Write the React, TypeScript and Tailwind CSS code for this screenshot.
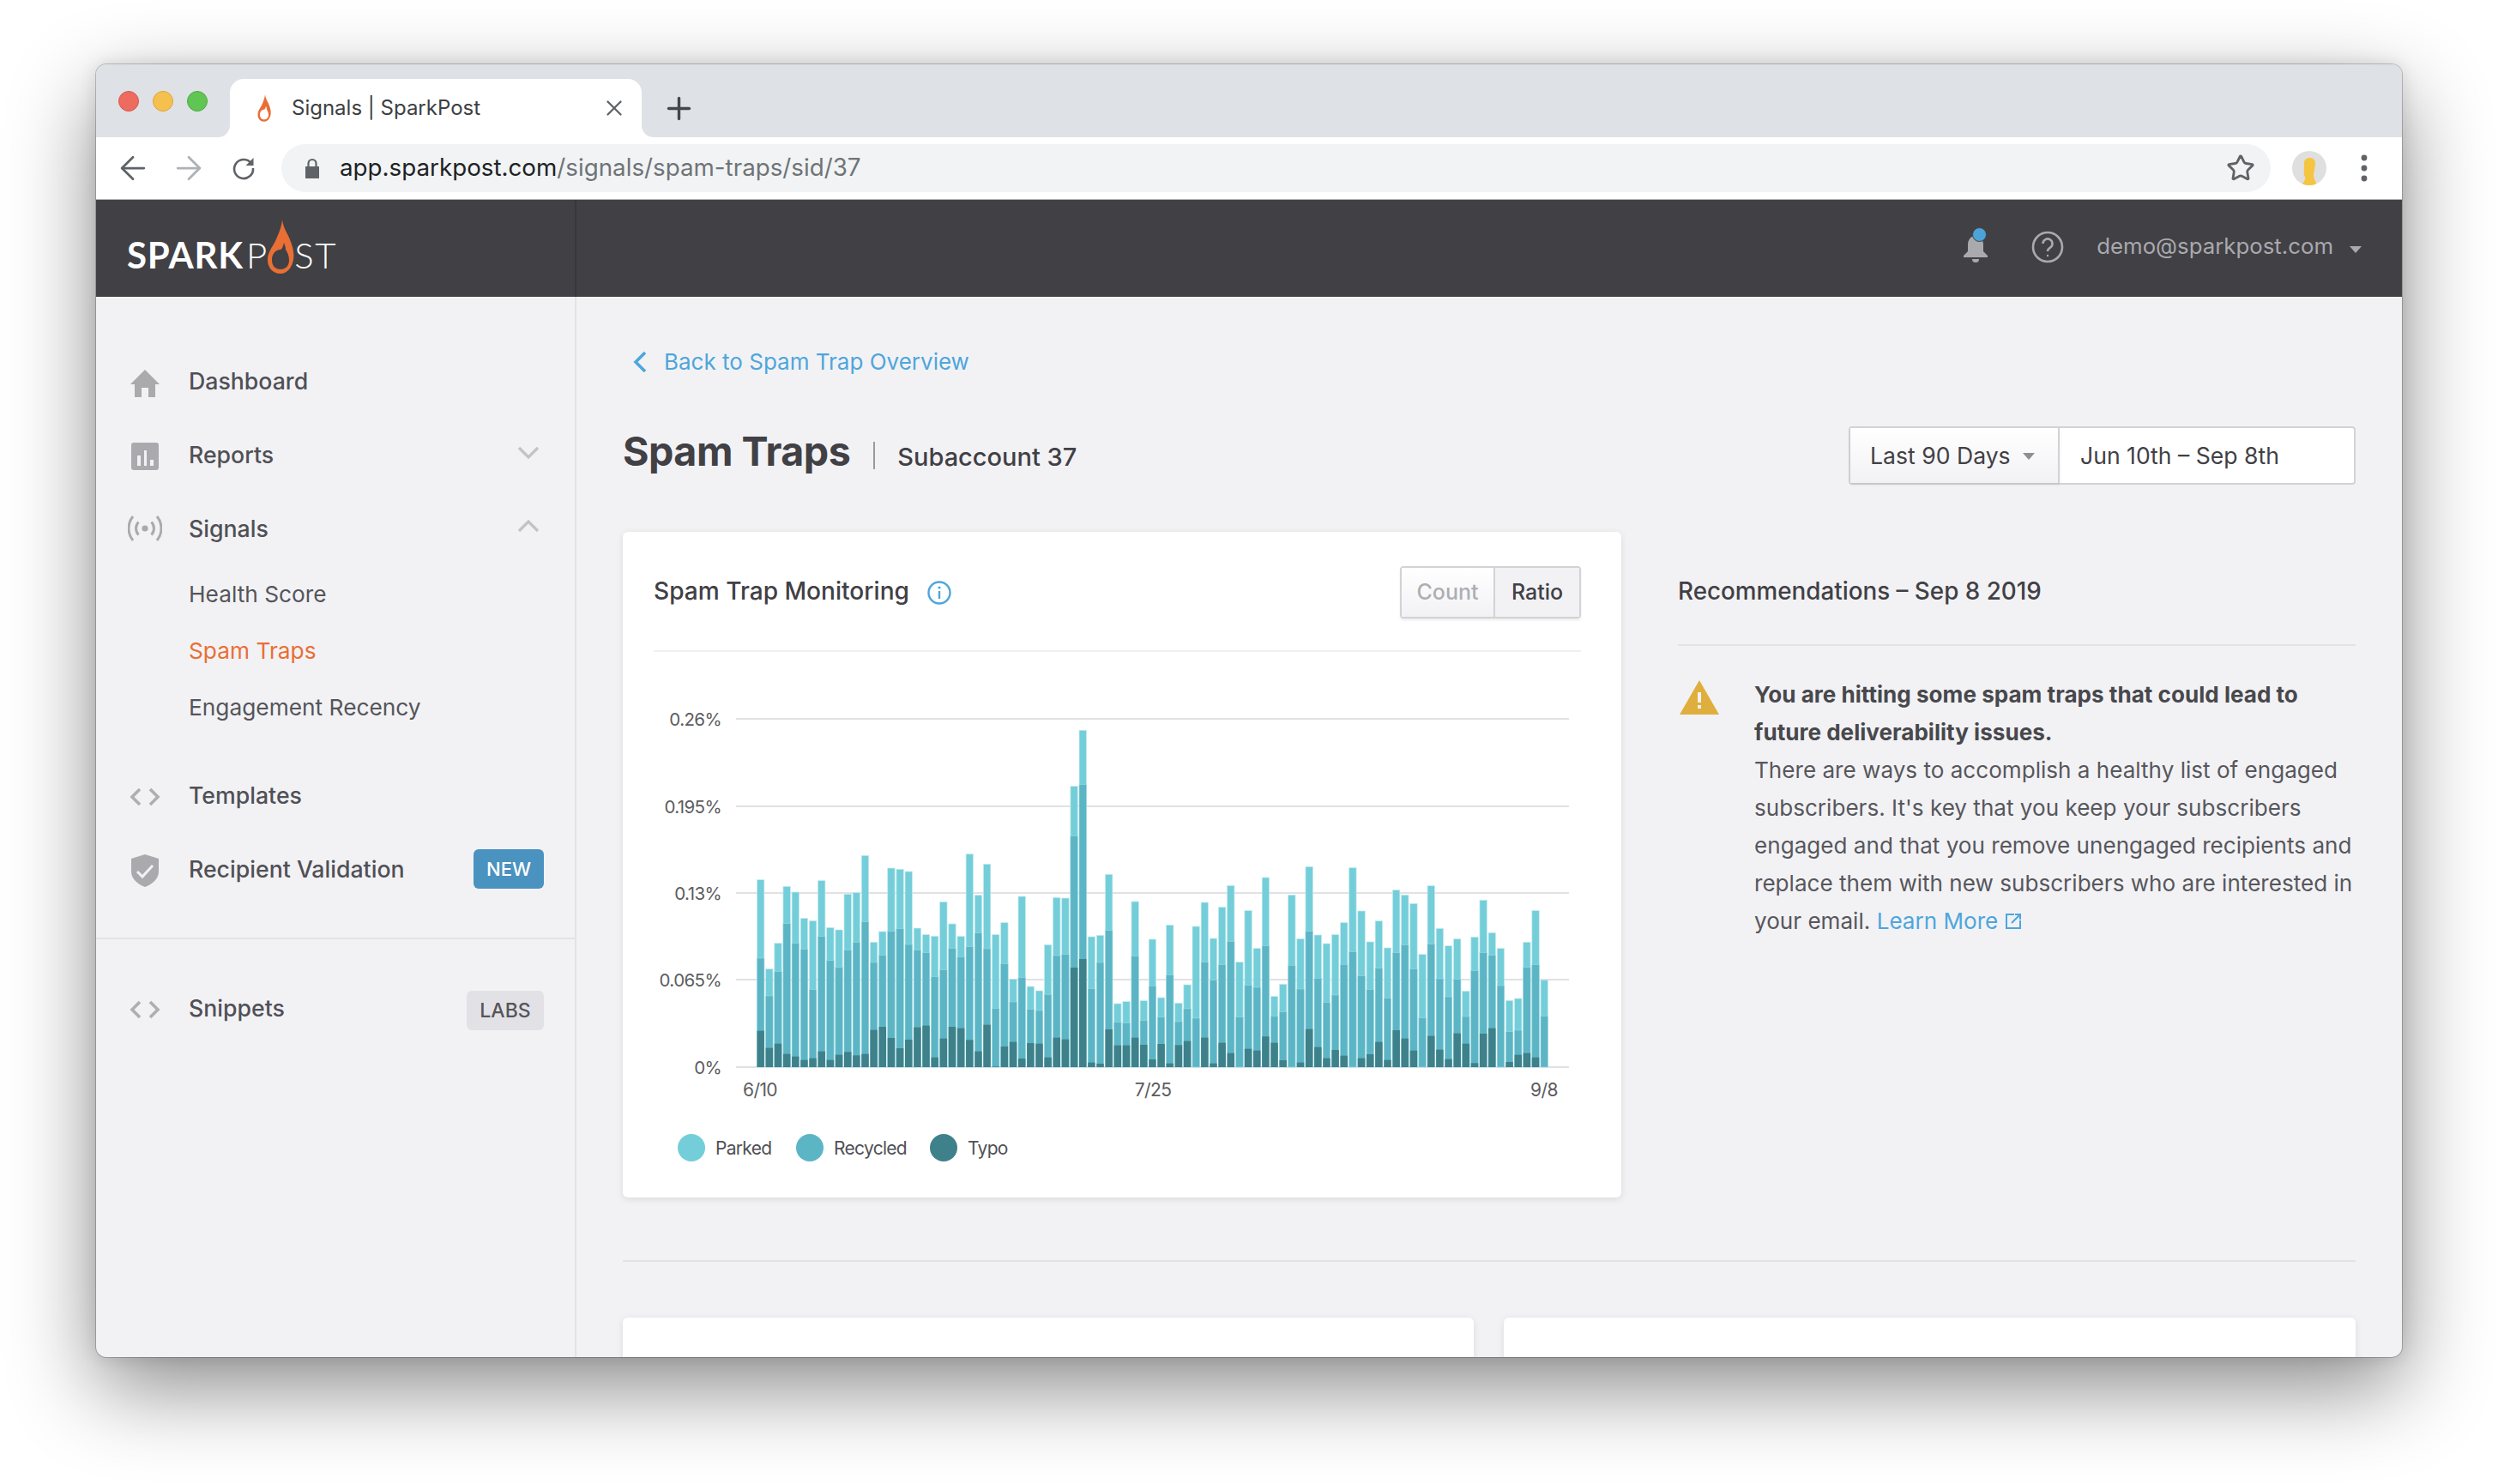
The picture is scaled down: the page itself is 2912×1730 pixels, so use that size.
/**
 * Signals - Spam Traps page inside a browser window
 */

import React from 'react';
import { ArrowLeft, ArrowRight, Star, X, Plus } from 'lucide-react';

// Bar tops as [total, recycled, typo], measured in 1/3 px from the top of the plot area
const bars: number[][] = [
  [677, 951, 1205], [989, 1083, 1265], [899, 998, 1250], [700, 830, 1286], [720, 899, 1295], [812, 920, 1307],
  [820, 1061, 1301], [680, 875, 1277], [844, 959, 1307], [852, 983, 1289], [727, 923, 1279], [722, 896, 1291],
  [592, 824, 1286], [895, 966, 1202], [858, 941, 1191], [636, 857, 1230], [640, 848, 1266], [648, 903, 1236],
  [846, 923, 1193], [869, 932, 1187], [874, 1016, 1298], [754, 992, 1232], [831, 917, 1191], [875, 947, 1196],
  [587, 911, 1237], [731, 863, 1277], [622, 918, 1184], [869, 1127, 1330], [827, 971, 1260], [1024, 1104, 1244],
  [735, 1019, 1302], [1050, 1130, 1248], [1065, 1134, 1250], [904, 1078, 1298], [739, 942, 1229], [741, 938, 1235],
  [350, 524, 984], [154, 344, 954], [876, 1058, 1316], [871, 966, 1320], [658, 854, 1200], [1110, 1175, 1256],
  [1103, 1178, 1256], [753, 944, 1229], [1100, 1169, 1254], [885, 1048, 1305], [1089, 1157, 1251], [835, 1010, 1319],
  [1108, 1173, 1255], [1044, 1128, 1241], [840, 1161, 1332], [756, 965, 1229], [882, 1028, 1319], [773, 974, 1247],
  [697, 893, 1283], [965, 1157, 1332], [785, 1046, 1268], [917, 1053, 1274], [669, 908, 1225], [1085, 1154, 1247],
  [1042, 1139, 1308], [730, 976, 1332], [883, 1059, 1316], [631, 857, 1199], [870, 1021, 1262], [900, 1106, 1301],
  [869, 1080, 1272], [827, 973, 1292], [635, 929, 1332], [786, 1013, 1301], [894, 1061, 1287], [821, 986, 1244],
  [915, 1091, 1307], [713, 932, 1203], [730, 905, 1232], [760, 989, 1274], [938, 1160, 1332], [698, 902, 1223],
  [847, 1023, 1271], [908, 1086, 1304], [884, 1025, 1214], [1066, 1155, 1250], [877, 995, 1318], [748, 932, 1215],
  [862, 941, 1196], [917, 1047, 1332], [1099, 1208, 1314], [1092, 1203, 1289], [895, 983, 1283], [785, 974, 1298],
  [1027, 1154, 1332],
];

const gridLines = [
  { y: 838, label: '0.26%' },
  { y: 940, label: '0.195%' },
  { y: 1041, label: '0.13%' },
  { y: 1142, label: '0.065%' },
  { y: 1244, label: '0%' },
];

const legend = [
  { label: 'Parked', x: 806, color: '#74ced9' },
  { label: 'Recycled', x: 944, color: '#5bb5c5' },
  { label: 'Typo', x: 1100, color: '#3e818a' },
];

function Flame({ className }: { className: string }) {
  return (
    <svg className={className} viewBox="0 0 32 63" fill="#e96f35">
      <path
        fillRule="evenodd"
        d="M18 0C19 10 25 17 28 26C31 34 32 40 31 47C29 57 23 63 16 63C7 63 1 56 1 47C1 38 6 33 10 25C13 18 17 10 18 0ZM16 35C10 35 6 40 6 47C6 54 10 58 16 58C22 58 26 54 26 47C26 42 24 38 22 35C22 32 21 30 20 27C19 31 18 34 16 35Z"
      />
    </svg>
  );
}

function CodeIcon() {
  return (
    <svg className="w-[36px] h-[22px]" viewBox="0 0 36 22" fill="none" stroke="#aeaeb3" strokeWidth="3.6">
      <path d="M12 2L3 11l9 9M24 2l9 9-9 9" />
    </svg>
  );
}

function NavChevron({ up }: { up?: boolean }) {
  return (
    <svg className="w-[26px] h-[15px] mr-[5px] -mt-[6px]" viewBox="0 0 26 15" fill="none" stroke="#c3c3c7" strokeWidth="3.2">
      <path d={up ? 'M2 13L13 2l11 11' : 'M2 2l11 11L24 2'} />
    </svg>
  );
}

function NavItem({ icon, label, right, iconClass }: { icon: React.ReactNode; label: string; right?: React.ReactNode; iconClass?: string }) {
  return (
    <div className="flex items-center h-[86px]">
      <div className={`flex justify-center w-[40px] mr-[31px] ${iconClass || ''}`}>{icon}</div>
      <span className="flex-1 text-[#505055] text-[26.7px] font-medium">{label}</span>
      {right}
    </div>
  );
}

function SpamTrapChart() {
  const pitch = (1796 - 882.5) / 90;
  const toY = (v: number) => 800 + v / 3;
  return (
    <svg className="block w-[1164px] h-[636px]" viewBox="726 760 1164 636" fontFamily="Inter, sans-serif">
      {gridLines.map((line) => (
        <g key={line.y}>
          <rect x="858" y={line.y - 1} width="971" height="2" fill="#e1e1e6" />
          <text x="841" y={line.y + 8} textAnchor="end" fontSize="20.5" letterSpacing="-0.6" fill="#5c5c60">
            {line.label}
          </text>
        </g>
      ))}
      {bars.map((bar, i) => {
        const x = 882.5 + pitch * i;
        return (
          <g key={i}>
            <rect x={x} y={toY(bar[0])} width="8.4" height={1244 - toY(bar[0])} fill="#74ced9" stroke="#c5ebef" strokeWidth="0.7" />
            <rect x={x} y={toY(bar[1])} width="8.4" height={1244 - toY(bar[1])} fill="#5bb5c5" stroke="#a9dbe3" strokeWidth="0.5" />
            <rect x={x} y={toY(bar[2])} width="8.4" height={1244 - toY(bar[2])} fill="#3e818a" />
          </g>
        );
      })}
      <text x="886" y="1278" textAnchor="middle" fontSize="21" letterSpacing="-0.6" fill="#5c5c60">6/10</text>
      <text x="1344" y="1278" textAnchor="middle" fontSize="21" letterSpacing="-0.6" fill="#5c5c60">7/25</text>
      <text x="1800" y="1278" textAnchor="middle" fontSize="21" letterSpacing="-0.6" fill="#5c5c60">9/8</text>
      {legend.map((item) => (
        <g key={item.label}>
          <circle cx={item.x} cy="1338" r="16" fill={item.color} />
          <text x={item.x + 28} y="1346" fontSize="21" letterSpacing="-0.7" fill="#505055">{item.label}</text>
        </g>
      ))}
    </svg>
  );
}

export default function App() {
  return (
    <div className="w-[2912px] h-[1730px] bg-white pt-[75px] pl-[112px] overflow-hidden" style={{ fontFamily: 'Inter, sans-serif' }}>
      <div className="w-[2688px] h-[1507px] flex flex-col overflow-hidden rounded-[12px] bg-[#f2f2f5] shadow-[0_0_0_1px_rgba(0,0,0,0.2),0_36px_100px_rgba(0,0,0,0.46),0_0_20px_rgba(0,0,0,0.12)]">
        {/* Tab strip */}
        <div className="h-[85px] shrink-0 bg-[#dee1e6] flex items-end">
          <div className="flex items-center gap-[16px] w-[156px] h-[85px] pl-[26px]">
            <span className="w-[24px] h-[24px] rounded-full bg-[#ee6b60] border border-[#d9574d]" />
            <span className="w-[24px] h-[24px] rounded-full bg-[#f6c04f] border border-[#dea634]" />
            <span className="w-[24px] h-[24px] rounded-full bg-[#61c554] border border-[#4dab41]" />
          </div>
          <div className="relative flex items-center w-[480px] h-[68px] bg-white rounded-t-[16px] pl-[32px] pr-[17px] text-[#3c4043]">
            <span className="absolute -left-[14px] bottom-0 w-[14px] h-[14px] bg-white">
              <span className="block w-full h-full bg-[#dee1e6] rounded-br-[14px]" />
            </span>
            <span className="absolute -right-[14px] bottom-0 w-[14px] h-[14px] bg-white">
              <span className="block w-full h-full bg-[#dee1e6] rounded-bl-[14px]" />
            </span>
            <Flame className="w-[16px] h-[32px]" />
            <span className="ml-[24px] flex-1 text-[24px]">Signals | SparkPost</span>
            <X className="w-[30px] h-[30px] text-[#5f6368]" strokeWidth={1.8} />
          </div>
          <div className="h-[68px] flex items-center ml-[23px]">
            <Plus className="w-[41px] h-[41px] text-[#45474a]" strokeWidth={2} />
          </div>
        </div>

        {/* Toolbar */}
        <div className="h-[73px] shrink-0 bg-white border-b border-[#b4b4b8] flex items-center pl-[21px] pr-[40px]">
          <ArrowLeft className="w-[44px] h-[44px] text-[#5f6368]" strokeWidth={1.5} />
          <ArrowRight className="w-[44px] h-[44px] ml-[21px] text-[#aeb1b5]" strokeWidth={1.5} />
          <svg className="w-[30px] h-[30px] ml-[27px]" viewBox="0 0 30 30" fill="none">
            <path d="M23.5 9A11 11 0 1 0 26 15" stroke="#5f6368" strokeWidth="2.6" />
            <path d="M26.5 3v9h-9z" fill="#5f6368" />
          </svg>
          <div className="flex-1 flex items-center h-[56px] ml-[29px] bg-[#f1f3f4] rounded-full pl-[27px] pr-[18px]">
            <svg className="w-[18px] h-[24px]" viewBox="0 0 18 24" fill="#5f6368">
              <path d="M1 10h16v14H1z" />
              <path d="M4.5 11V6.5a4.5 4.5 0 0 1 9 0V11" fill="none" stroke="#5f6368" strokeWidth="2.2" />
            </svg>
            <div className="flex-1 ml-[23px] text-[27.75px] text-[#202124]">
              app.sparkpost.com<span className="text-[#6f7377]">/signals/spam-traps/sid/37</span>
            </div>
            <Star className="w-[34px] h-[34px] text-[#5f6368]" strokeWidth={2} />
          </div>
          <div className="w-[40px] h-[40px] ml-[25px] rounded-full bg-[#dfdfdf] overflow-hidden">
            <svg className="w-[40px] h-[40px]" viewBox="0 0 40 40" fill="#f5c542">
              <path d="M14 14C14 9 18 8 21 8C25 8 27 11 27 15C27 20 25 24 25 28C25 32 27 35 29 40H11C13 36 16 34 15 30C13 28 14 20 14 14Z" />
            </svg>
          </div>
          <svg className="w-[8px] h-[34px] ml-[40px]" viewBox="0 0 8 34" fill="#5f6368">
            <circle cx="4" cy="5" r="3.4" />
            <circle cx="4" cy="17" r="3.4" />
            <circle cx="4" cy="29" r="3.4" />
          </svg>
        </div>

        {/* App header */}
        <div className="h-[113px] shrink-0 bg-[#414045] flex items-center">
          <div className="w-[560px] h-full flex items-start border-r-2 border-[#38373c] pl-[36px] pt-[20px] text-white" style={{ fontFamily: 'Lato, sans-serif' }}>
            <div className="flex items-end h-[63px]">
              <span className="text-[42px] leading-[38px] font-bold tracking-[0.8px]">SPARK</span>
              <span className="text-[42px] leading-[38px] font-light ml-[3px]">P</span>
              <Flame className="w-[32px] h-[63px] translate-y-[3px]" />
              <span className="text-[42px] leading-[38px] font-light tracking-[1.5px]">ST</span>
            </div>
          </div>
          <div className="flex-1 flex items-center justify-end pr-[47px] pb-[4px] text-[#a9a9ae]">
            <div className="relative w-[30px] h-[34px] mr-[50px] mt-[4px]">
              <svg className="w-[30px] h-[34px]" viewBox="0 0 30 34" fill="#a9a9ae">
                <path d="M15 2C21 2 24 7 24 12V20L29 25V27H1V25L6 20V12C6 7 9 2 15 2Z" />
                <path d="M11 29h8a4 4 0 0 1-8 0Z" />
              </svg>
              <span className="absolute -top-[8px] left-[11px] w-[17px] h-[17px] rounded-full bg-[#4ba3d8] border border-[#414045]" />
            </div>
            <svg className="w-[38px] h-[38px] mr-[38px]" viewBox="0 0 38 38" fill="none" stroke="#a9a9ae" strokeWidth="2.6">
              <circle cx="19" cy="19" r="17" />
              <path d="M13.5 15a5.5 5.5 0 1 1 8.5 4.6c-2 1.3-3 2.3-3 4.4" />
              <circle cx="19" cy="29" r="1.2" fill="#a9a9ae" stroke="none" />
            </svg>
            <span className="text-[25.8px]">demo@sparkpost.com</span>
            <svg className="w-[14px] h-[8px] ml-[19px] mt-[6px]" viewBox="0 0 14 8" fill="#a9a9ae">
              <path d="M0 0h14L7 8z" />
            </svg>
          </div>
        </div>

        <div className="flex-1 flex min-h-0">
          {/* Sidebar */}
          <aside className="w-[560px] shrink-0 border-r-2 border-[#e3e3e7] pt-[55px]">
            <div className="pl-[37px] pr-[36px]">
              <NavItem
                label="Dashboard"
                iconClass="mt-[6px]"
                icon={
                  <svg className="w-[34px] h-[32px]" viewBox="0 0 34 32" fill="#a9a9ae">
                    <path d="M17 0L34 17H29V32H21V21H13V32H5V17H0Z" />
                  </svg>
                }
              />
              <NavItem
                label="Reports"
                iconClass="mt-[4px]"
                icon={
                  <svg className="w-[32px] h-[32px]" viewBox="0 0 32 32">
                    <rect width="32" height="32" rx="3" fill="#a9a9ae" />
                    <path d="M7 15h4v12H7zM15 9h3v18h-3zM22 20h4v7h-4z" fill="#f2f2f5" />
                  </svg>
                }
                right={<NavChevron />}
              />
              <NavItem
                label="Signals"
                icon={
                  <svg className="w-[40px] h-[32px]" viewBox="0 0 40 32" fill="none" stroke="#a9a9ae" strokeWidth="3">
                    <circle cx="20" cy="16" r="3.6" fill="#a9a9ae" stroke="none" />
                    <path d="M12.5 8.5a11 11 0 0 0 0 15M27.5 8.5a11 11 0 0 1 0 15M6 2a22 22 0 0 0 0 28M34 2a22 22 0 0 1 0 28" />
                  </svg>
                }
                right={<NavChevron up />}
              />
              <div className="pl-[71px] text-[26.3px] text-[#55555a]">
                <div className="h-[66px] pt-[2px] flex items-center">Health Score</div>
                <div className="h-[66px] pt-[2px] flex items-center text-[#e96f35]">Spam Traps</div>
                <div className="h-[66px] pt-[2px] flex items-center">Engagement Recency</div>
              </div>
              <div className="mt-[27px]">
                <NavItem label="Templates" iconClass="mt-[4px]" icon={<CodeIcon />} />
                <NavItem
                  label="Recipient Validation"
                  iconClass="mt-[4px]"
                  icon={
                    <svg className="w-[32px] h-[38px]" viewBox="0 0 32 38">
                      <path d="M16 0L32 5V20C32 29 24 35 16 38C8 35 0 29 0 20V5Z" fill="#a9a9ae" />
                      <path d="M7 20l6 6 12-13" fill="none" stroke="#f2f2f5" strokeWidth="3" />
                    </svg>
                  }
                  right={
                    <span className="flex items-center justify-center w-[82px] h-[46px] rounded-[6px] bg-[#4a92c0] text-white text-[22px] font-medium">NEW</span>
                  }
                />
              </div>
            </div>
            <div className="h-[2px] mt-[37px] bg-[#e3e3e7]" />
            <div className="mt-[37px] pl-[37px] pr-[36px]">
              <NavItem
                label="Snippets"
                iconClass="mt-[4px]"
                icon={<CodeIcon />}
                right={
                  <span className="flex items-center justify-center w-[90px] h-[46px] mt-[6px] rounded-[6px] bg-[#e2e2e6] text-[#55555a] text-[23px] font-medium">LABS</span>
                }
              />
            </div>
          </aside>

          {/* Main content */}
          <main className="flex-1 min-w-0 overflow-hidden px-[54px] pt-[60px]">
            <div className="flex items-center h-[30px] text-[#4ea6dc] text-[26px]">
              <svg className="w-[16px] h-[26px] ml-[12px] mr-[20px] mt-[2px]" viewBox="0 0 16 26" fill="none" stroke="#4ea6dc" strokeWidth="3.6">
                <path d="M14 2L3 13l11 11" />
              </svg>
              Back to Spam Trap Overview
            </div>

            <div className="flex items-center justify-between h-[68px] mt-[61px]">
              <div className="flex items-center text-[#414045]">
                <h1 className="text-[46.6px] font-bold tracking-[-0.5px] -mt-[8px]">Spam Traps</h1>
                <span className="w-[2px] h-[32px] bg-[#9a9a9e] ml-[27px] mr-[26px]" />
                <span className="text-[29px] font-medium mt-[3px]">Subaccount 37</span>
              </div>
              <div className="flex h-[68px] w-[591px] rounded-[4px] border-2 border-[#d2d2d7] bg-white text-[#414045] text-[26.6px]">
                <div className="flex items-center w-[244px] pl-[23px] pt-[2px] border-r-2 border-[#d2d2d7] bg-gradient-to-b from-white to-[#f2f2f5] shadow-[0_2px_3px_rgba(0,0,0,0.08)]">
                  Last 90 Days
                  <svg className="w-[14px] h-[8px] ml-[14px]" viewBox="0 0 14 8" fill="#8e8e93">
                    <path d="M0 0h14L7 8z" />
                  </svg>
                </div>
                <div className="flex items-center pl-[24px] pt-[2px]">Jun 10th – Sep 8th</div>
              </div>
            </div>

            <div className="flex mt-[55px]">
              <section className="w-[1164px] h-[776px] shrink-0 bg-white rounded-[6px] shadow-[0_2px_8px_rgba(0,0,0,0.1)]">
                <div className="ml-[36px] mr-[47px] h-[140px] pt-[40px] border-b-2 border-[#f0f0f3]">
                  <div className="flex items-center justify-between h-[61px]">
                    <div className="flex items-center text-[#414045] text-[28.1px] font-medium -mt-[2px]">
                      Spam Trap Monitoring
                      <svg className="w-[28px] h-[28px] ml-[21px] mt-[4px]" viewBox="0 0 28 28" fill="none" stroke="#4ea6dc" strokeWidth="2.4">
                        <circle cx="14" cy="14" r="12.5" />
                        <path d="M14 12v9" />
                        <circle cx="14" cy="8" r="1.6" fill="#4ea6dc" stroke="none" />
                      </svg>
                    </div>
                    <div className="flex h-[61px] w-[211px] rounded-[4px] border-2 border-[#d2d2d7] text-[25px] font-medium shadow-[0_2px_3px_rgba(0,0,0,0.08)]">
                      <div className="flex items-center justify-center w-[109px] border-r-2 border-[#d2d2d7] text-[#aeaeb3] bg-gradient-to-b from-white to-[#f2f2f5]">Count</div>
                      <div className="flex-1 flex items-center justify-center text-[#414045] bg-[#f2f2f5]">Ratio</div>
                    </div>
                  </div>
                </div>
                <SpamTrapChart />
              </section>

              <section className="ml-[66px] flex-1 min-w-0 pt-[50px]">
                <h2 className="h-[40px] flex items-center text-[#414045] text-[27.8px] font-medium">Recommendations – Sep 8 2019</h2>
                <div className="h-[2px] mt-[41px] bg-[#e3e3e7]" />
                <div className="flex mt-[35px]">
                  <svg className="w-[46px] h-[40px] shrink-0 ml-[2px] mt-[5px]" viewBox="0 0 46 40">
                    <path d="M23 0L46 40H0Z" fill="#e0ae3c" />
                    <path d="M21 14h4v12h-4zM21 29h4v4h-4z" fill="#f2f2f5" />
                  </svg>
                  <div className="ml-[41px] w-[705px] shrink-0 text-[26.1px] leading-[44px] text-[#57575c]">
                    <div className="font-bold text-[#48484c]">You are hitting some spam traps that could lead to future deliverability issues.</div>
                    <div>
                      There are ways to accomplish a healthy list of engaged subscribers. It's key that you keep your subscribers engaged and that you remove unengaged recipients and replace them with new subscribers who are interested in your email.{' '}
                      <span className="text-[#4ea6dc]">
                        Learn More
                        <svg className="inline-block w-[20px] h-[20px] ml-[8px] -mt-[4px]" viewBox="0 0 20 20" fill="none" stroke="#4ea6dc" strokeWidth="2">
                          <path d="M11 2H2v16h16V9M8 12L18 2M12 2h6v6" />
                        </svg>
                      </span>
                    </div>
                  </div>
                </div>
              </section>
            </div>

            <div className="h-[2px] mt-[73px] bg-[#e3e3e7]" />

            <div className="flex gap-[35px] mt-[65px]">
              <div className="w-[992px] h-[100px] bg-white rounded-[6px] shadow-[0_2px_8px_rgba(0,0,0,0.1)]" />
              <div className="flex-1 h-[100px] bg-white rounded-[6px] shadow-[0_2px_8px_rgba(0,0,0,0.1)]" />
            </div>
          </main>
        </div>
      </div>
    </div>
  );
}
